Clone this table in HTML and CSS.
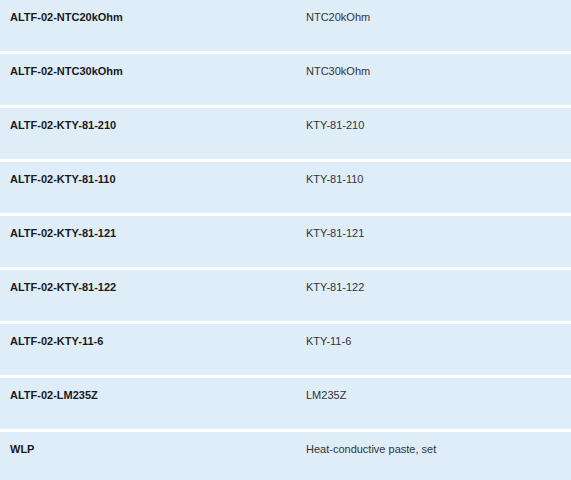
FILE: index.html
```html
<!DOCTYPE html>
<html>
<head>
<meta charset="utf-8">
<link rel="stylesheet" href="styles.css">
</head>
<body>
<div class="list">
  <div class="row"><div class="code">ALTF-02-NTC20kOhm</div><div class="desc">NTC20kOhm</div></div>
  <div class="row"><div class="code">ALTF-02-NTC30kOhm</div><div class="desc">NTC30kOhm</div></div>
  <div class="row"><div class="code">ALTF-02-KTY-81-210</div><div class="desc">KTY-81-210</div></div>
  <div class="row"><div class="code">ALTF-02-KTY-81-110</div><div class="desc">KTY-81-110</div></div>
  <div class="row"><div class="code">ALTF-02-KTY-81-121</div><div class="desc">KTY-81-121</div></div>
  <div class="row"><div class="code">ALTF-02-KTY-81-122</div><div class="desc">KTY-81-122</div></div>
  <div class="row"><div class="code">ALTF-02-KTY-11-6</div><div class="desc">KTY-11-6</div></div>
  <div class="row"><div class="code">ALTF-02-LM235Z</div><div class="desc">LM235Z</div></div>
  <div class="row"><div class="code">WLP</div><div class="desc">Heat-conductive paste, set</div></div>
</div>
</body>
</html>
```
FILE: styles.css
```css
html, body {
  margin: 0;
  padding: 0;
  background: #ffffff;
}
body {
  font-family: "Liberation Sans", Arial, sans-serif;
  font-size: 11px;
  line-height: 13px;
}
.list {
  display: flex;
  flex-direction: column;
  gap: 3px;
}
.row {
  display: grid;
  grid-template-columns: 296px 1fr;
  height: 51px;
  background: #dfedf9;
}
.code {
  padding: 11px 10px 0 10px;
  font-weight: bold;
  color: #1a1a1a;
}
.desc {
  padding: 11px 10px 0 10px;
  color: #333333;
}
```
